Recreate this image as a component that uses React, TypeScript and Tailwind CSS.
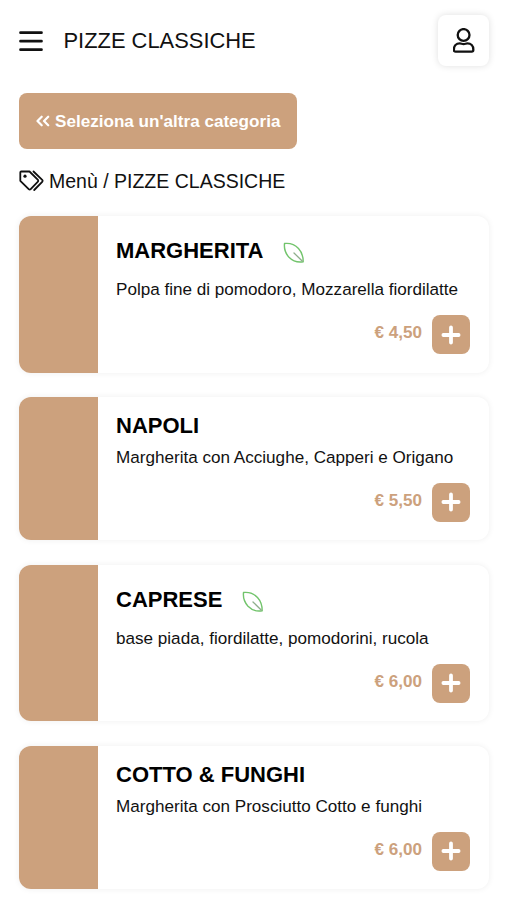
const pizzas = [
  {
    name: "MARGHERITA",
    description: "Polpa fine di pomodoro, Mozzarella fiordilatte",
    price: "€ 4,50",
    vegetarian: true,
  },
  {
    name: "NAPOLI",
    description: "Margherita con Acciughe, Capperi e Origano",
    price: "€ 5,50",
    vegetarian: false,
  },
  {
    name: "CAPRESE",
    description: "base piada, fiordilatte, pomodorini, rucola",
    price: "€ 6,00",
    vegetarian: true,
  },
  {
    name: "COTTO & FUNGHI",
    description: "Margherita con Prosciutto Cotto e funghi",
    price: "€ 6,00",
    vegetarian: false,
  },
] as const;

function LeafIcon() {
  return (
    <svg className="mt-1" width="22" height="22" viewBox="0 0 22 22" fill="none" strokeLinecap="round" strokeLinejoin="round" aria-hidden="true">
      <path
        d="M1.5 1.5C7 .9 12 2.700 15.500 6.500c3.600 3.900 4.700 8.500 4.700 13.200-5.400.9-10.500-.7-14.200-4.500C2.600 11.500.9 7 1.500 1.500Z"
        stroke="#72c46c"
        strokeWidth="1.4"
      />
      <path d="m11 11 8.200 8" stroke="#8fae8c" strokeWidth="1.3" />
    </svg>
  );
}

function TagsIcon() {
  return (
    <svg width="25" height="22" viewBox="0 0 25 22" fill="none" stroke="#111" strokeWidth="1.8" strokeLinecap="round" strokeLinejoin="round" aria-hidden="true">
      <path d="M2.300 1.500h8.200l8.200 8.200c.7.700.7 1.500 0 2.200l-7 7.200c-.6.600-1.400.6-2 0L1.300 10.800V2.500c0-.6.400-1 1-1Z" />
      <path d="m14.500 1.500 8.700 8.400c.6.600.6 1.300 0 1.900l-8 8.200" />
      <circle cx="6" cy="6.200" r="1.600" fill="#111" stroke="none" />
    </svg>
  );
}

function PizzaCard({ pizza }: { pizza: (typeof pizzas)[number] }) {
  return (
    <article
      className={`flex overflow-hidden rounded-xl bg-white shadow-[0_0_6px_rgba(0,0,0,0.07)] ${
        pizza.vegetarian ? "h-[156.5px]" : "h-[143.7px]"
      }`}
    >
      <div className="w-[78.5px] shrink-0 bg-[#cca17d]" />
      <div className="flex min-w-0 flex-1 flex-col pr-[19px] pb-[18.5px] pl-[18.5px]">
        <div className={`flex items-center gap-5 ${pizza.vegetarian ? "mt-[22.4px]" : "mt-[16px]"}`}>
          <h2 className="text-[22px] leading-[26px] font-bold whitespace-nowrap text-black">{pizza.name}</h2>
          {pizza.vegetarian && <LeafIcon />}
        </div>
        <p className={`text-[17.1px] leading-5 whitespace-nowrap ${pizza.vegetarian ? "mt-[15.8px]" : "mt-[9.6px]"}`}>
          {pizza.description}
        </p>
        <div className="mt-auto flex items-center justify-end gap-[10px]">
          <span className="pb-[3.4px] text-[17.1px] leading-5 font-bold text-[#cca17d]">{pizza.price}</span>
          <button className="flex h-[39px] w-[38px] items-center justify-center rounded-lg bg-[#cca17d]" aria-label="Aggiungi">
            <svg width="20" height="20" viewBox="0 0 20 20" stroke="white" strokeWidth="3.8" strokeLinecap="round" aria-hidden="true">
              <path d="M10 2.400v15.200M2.400 10h15.200" />
            </svg>
          </button>
        </div>
      </div>
    </article>
  );
}

export default function App() {
  return (
    <div className="h-[900px] overflow-hidden bg-white px-[19px] pt-[15px] font-['Liberation_Sans',Arial,sans-serif] text-[#111]">
      {/* ── Header ── */}
      <header className="flex h-[51px] items-center">
        <button aria-label="Apri menù">
          <svg width="24" height="22" viewBox="0 0 24 22" stroke="#111" strokeWidth="2.7" strokeLinecap="round" aria-hidden="true">
            <path d="M1.500 2.700h21M1.500 11.200h21M1.500 19.700h21" />
          </svg>
        </button>
        <h1 className="ml-[20.5px] text-[21.9px] leading-7">PIZZE CLASSICHE</h1>
        <button
          className="mr-[-1px] ml-auto flex size-[51px] items-center justify-center rounded-lg bg-white shadow-[0_0_7px_rgba(0,0,0,0.13)]"
          aria-label="Profilo"
        >
          <svg width="22" height="26" viewBox="0 0 22 26" fill="none" stroke="#111" strokeWidth="2.3" strokeLinejoin="round" aria-hidden="true">
            <circle cx="10.600" cy="7" r="5.900" />
            <path d="M6.800 15.400c1.500 0 2.100.7 3.800.7s2.300-.7 3.800-.7c3.600 0 5.900 2.700 5.900 6v.7c0 .9-.7 1.600-1.600 1.600H2.500c-.9 0-1.600-.7-1.600-1.600v-.7c0-3.300 2.300-6 5.900-6Z" />
          </svg>
        </button>
      </header>

      {/* ── Navigation ── */}
      <button className="mt-[27px] flex h-[56px] w-[278px] items-center gap-[5px] rounded-lg bg-[#cca17d] pl-[17px] text-[17.1px] font-bold whitespace-nowrap text-white">
        <svg width="14" height="12" viewBox="0 0 14 12" fill="none" stroke="white" strokeWidth="2.2" strokeLinecap="round" strokeLinejoin="round" aria-hidden="true">
          <path d="M5.700 1.700 1.500 6l4.200 4.300M12.200 1.700 8 6l4.200 4.300" />
        </svg>
        <span className="pt-px">Seleziona un'altra categoria</span>
      </button>
      <nav className="mt-[19px] flex h-[26px] items-center gap-[5px] text-[19.5px] whitespace-nowrap">
        <TagsIcon />
        <span className="pt-px">Menù / PIZZE CLASSICHE</span>
      </nav>

      {/* ── Pizza list ── */}
      <main className="mt-[22px] mr-[-1px] flex flex-col gap-[24.3px]">
        {pizzas.map((pizza) => (
          <PizzaCard key={pizza.name} pizza={pizza} />
        ))}
      </main>
    </div>
  );
}
